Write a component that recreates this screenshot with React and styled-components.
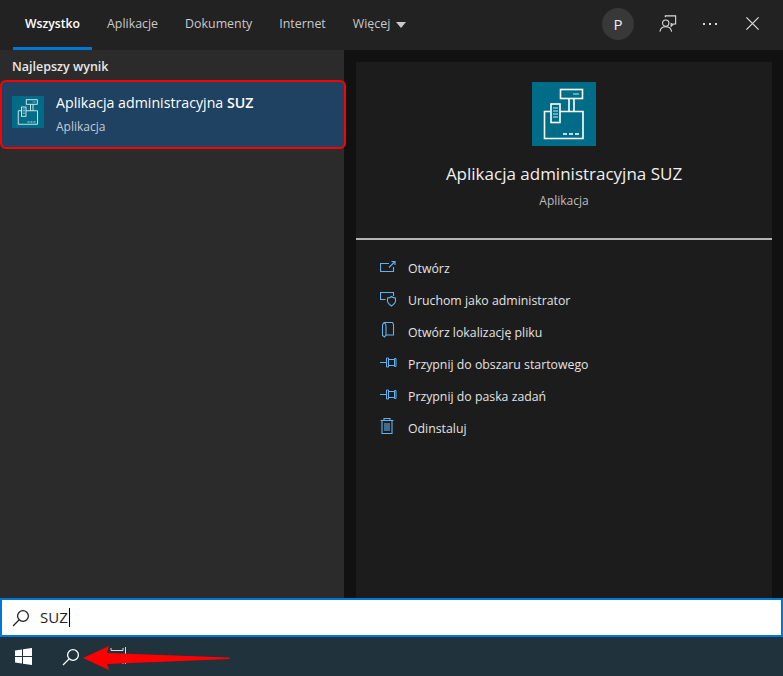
import React from "react";
import styled, { createGlobalStyle } from "styled-components";

const GlobalStyle = createGlobalStyle`
  html, body { margin: 0; padding: 0; background: #111; }
  body { font-family: "Open Sans", "Noto Sans", sans-serif; }
`;

const tabs = ["Wszystko", "Aplikacje", "Dokumenty", "Internet"];

const actions = [
  { label: "Otwórz", icon: "open" },
  { label: "Uruchom jako administrator", icon: "shield" },
  { label: "Otwórz lokalizację pliku", icon: "folder" },
  { label: "Przypnij do obszaru startowego", icon: "pin" },
  { label: "Przypnij do paska zadań", icon: "pin" },
  { label: "Odinstaluj", icon: "trash" }
];

function AppGlyph({ size }) {
  return (
    <svg width={size} height={size} viewBox="0 0 64 64" fill="none" stroke="#fff" strokeWidth="1.6">
      <rect x="28.5" y="7.5" width="22" height="9" />
      <path d="M37 17v12M42 17v12" />
      <path d="M18 29.5H12.5V56.5H51V29.5H28" />
      <rect x="19" y="22" width="9" height="18.5" />
      <path d="M41 12h6M21 26h5M21 29h5M21 32h5M21 35h5" strokeOpacity=".55" />
      <path d="M31 52h4M37 52h4M43 52h4" />
    </svg>
  );
}

function ActionIcon({ name }) {
  const common = { width: 18, height: 18, viewBox: "0 0 18 18", fill: "none", stroke: "#5fb2ee", strokeWidth: 1.1 };
  if (name === "open") {
    return (
      <svg {...common}>
        <path d="M9 6.500H.5v8h13V10" />
        <path d="M9 10.500L14.500 5M11.500 4.500h3.500V8" />
      </svg>
    );
  }
  if (name === "shield") {
    return (
      <svg {...common}>
        <path d="M5.500 10.500H.5v-7h13V7" />
        <path d="M7.500 9c2 0 3-.5 4-1.500 1 1 2 1.500 4 1.500v3c0 2-2 3.500-4 5-2-1.500-4-3-4-5z" />
      </svg>
    );
  }
  if (name === "folder") {
    return (
      <svg {...common}>
        <path d="M4 1.500h8.500l1 2v10.500H6" />
        <path d="M4 1.500c1.500 1 2 2 2 3.500v9l-1.500 2-2-1.500V4z" />
      </svg>
    );
  }
  if (name === "trash") {
    return (
      <svg {...common}>
        <path d="M.5 3.500h13M4 3.500V1.500h6v2M2 3.500v13h10v-13M5 6v8M7 6v8M9 6v8" />
      </svg>
    );
  }
  return (
    <svg {...common} strokeWidth="1">
      <path d="M0 9.500h6M6.500 5h2v9h-2zM8.500 6.500h6M8.500 12.500h6M14.500 5.500h1.500v8h-1.500z" />
    </svg>
  );
}

function Lens({ color }) {
  return (
    <svg width="18" height="18" viewBox="0 0 18 18" fill="none" stroke={color} strokeWidth="1.300">
      <circle cx="11" cy="7" r="5.400" />
      <path d="M7 11l-6 6" />
    </svg>
  );
}

export default function App() {
  return (
    <>
      <GlobalStyle />
      <Page>
        <TopBar>
          <TabList>
            {tabs.map((tab, i) => (
              <Tab key={tab} $active={i === 0}>{tab}</Tab>
            ))}
            <Tab>
              Więcej
              <Caret />
            </Tab>
          </TabList>
          <TopActions>
            <Avatar>P</Avatar>
            <TopIcon>
              <svg width="18" height="18" viewBox="0 0 20 20" fill="none" stroke="#ddd" strokeWidth="1.200">
                <circle cx="7.500" cy="9" r="3.500" />
                <path d="M1 18.500c.5-3.500 3-5.500 6.500-5.500s6 2 6.500 5.500" />
                <path d="M7 2.500V1h11.500v9H16l-2.500 2.500V9.500l2 1" />
              </svg>
            </TopIcon>
            <TopIcon>
              <Dots><i /><i /><i /></Dots>
            </TopIcon>
            <TopIcon>
              <svg width="15" height="15" viewBox="0 0 16 16" stroke="#ddd" strokeWidth="1.300">
                <path d="M1.500 1.500l13 13M14.500 1.500l-13 13" />
              </svg>
            </TopIcon>
          </TopActions>
        </TopBar>

        <Content>
          <ResultsPane>
            <SectionTitle>Najlepszy wynik</SectionTitle>
            <ResultRow>
              <ResultTile>
                <AppGlyph size={32} />
              </ResultTile>
              <ResultText>
                <ResultName>
                  Aplikacja administracyjna <b>SUZ</b>
                </ResultName>
                <ResultKind>Aplikacja</ResultKind>
              </ResultText>
            </ResultRow>
          </ResultsPane>

          <DetailPane>
            <DetailHead>
              <DetailTile>
                <AppGlyph size={64} />
              </DetailTile>
              <DetailName>Aplikacja administracyjna SUZ</DetailName>
              <DetailKind>Aplikacja</DetailKind>
            </DetailHead>
            <ActionList>
              {actions.map(action => (
                <ActionRow key={action.label}>
                  <ActionIconBox>
                    <ActionIcon name={action.icon} />
                  </ActionIconBox>
                  {action.label}
                </ActionRow>
              ))}
            </ActionList>
          </DetailPane>
        </Content>

        <SearchBox>
          <Lens color="#222" />
          <SearchValue>SUZ</SearchValue>
        </SearchBox>

        <TaskBar>
          <StartButton>
            <svg width="17" height="17" viewBox="0 0 17 17" fill="#fff">
              <path d="M0 2.400l7-1v6.700H0zM8 1.300L17 0v8.100H8zM0 9h7v6.600l-7-1zM8 9h9v8l-9-1.300z" />
            </svg>
          </StartButton>
          <TaskSearch>
            <Lens color="#fff" />
          </TaskSearch>
          <TaskView width="17" height="18" viewBox="0 0 17 18" fill="none" stroke="#ddd">
            <path d="M1 1v2.500h12V1M15.500 0v17M13 14v3" />
          </TaskView>
          <Arrow width="150" height="26" viewBox="0 0 150 26">
            <path d="M0 13L26 1 24 8 146.500 12.600V14L24 19 26 25z" fill="#f00" />
          </Arrow>
        </TaskBar>
      </Page>
    </>
  );
}

const Page = styled.div`
  width: 783px;
  height: 676px;
  display: flex;
  flex-direction: column;
  background: #111;
  overflow: hidden;
`;

const TopBar = styled.div`
  height: 50px;
  flex: none;
  display: flex;
  justify-content: space-between;
  background: #222222;
`;

const TabList = styled.div`
  display: flex;
  padding-left: 13px;
`;

const Tab = styled.div`
  height: 50px;
  box-sizing: border-box;
  padding: 0 12px;
  margin-right: 3px;
  display: flex;
  align-items: center;
  font-size: ${props => (props.$active ? "12.200px" : "12.400px")};
  color: ${props => (props.$active ? "#fff" : "#c9c9c9")};
  font-weight: ${props => (props.$active ? 600 : 400)};
  border-bottom: 3px solid ${props => (props.$active ? "#0078d7" : "transparent")};
`;

const Caret = styled.span`
  margin-left: 6px;
  margin-top: 2px;
  border-left: 5.500px solid transparent;
  border-right: 5.500px solid transparent;
  border-top: 6px solid #c9c9c9;
`;

const TopActions = styled.div`
  display: flex;
  align-items: center;
  padding: 0 10px 3px 0;
`;

const Avatar = styled.div`
  width: 32px;
  height: 32px;
  margin-right: 13px;
  border-radius: 50%;
  background: #383838;
  color: #eee;
  font-size: 15px;
  display: flex;
  align-items: center;
  justify-content: center;
`;

const TopIcon = styled.div`
  width: 42px;
  height: 32px;
  display: flex;
  align-items: center;
  justify-content: center;
`;

const Dots = styled.div`
  display: flex;
  gap: 4px;
  i {
    width: 2px;
    height: 2px;
    background: #ddd;
  }
`;

const Content = styled.div`
  flex: 1;
  min-height: 0;
  display: flex;
`;

const ResultsPane = styled.div`
  width: 344px;
  flex: none;
  background: #2b2b2b;
`;

const SectionTitle = styled.div`
  height: 30px;
  padding: 2px 0 0 12px;
  box-sizing: border-box;
  display: flex;
  align-items: center;
  font-size: 12.500px;
  font-weight: 600;
  color: #e8e8e8;
`;

const ResultRow = styled.div`
  box-sizing: border-box;
  height: 69px;
  width: 346px;
  position: relative;
  display: flex;
  align-items: center;
  padding-left: 10px;
  gap: 12px;
  background: #1f4262;
  border: 2px solid #f00;
  border-radius: 6px;
`;

const ResultTile = styled.div`
  width: 32px;
  height: 32px;
  background: #006c87;
  margin-bottom: 5px;
`;

const ResultText = styled.div`
  display: flex;
  flex-direction: column;
  gap: 6px;
  margin-top: -1px;
`;

const ResultName = styled.div`
  font-size: 14.200px;
  color: #fff;
  b {
    font-weight: 600;
  }
`;

const ResultKind = styled.div`
  font-size: 12px;
  color: #c3ccd4;
`;

const DetailPane = styled.div`
  width: 416px;
  flex: none;
  margin: 12px 11px 0 12px;
  background: #1c1c1c;
`;

const DetailHead = styled.div`
  height: 178px;
  box-sizing: border-box;
  padding-top: 20px;
  display: flex;
  flex-direction: column;
  align-items: center;
  border-bottom: 2px solid #b5b5b5;
`;

const DetailTile = styled.div`
  width: 64px;
  height: 64px;
  background: #006c87;
`;

const DetailName = styled.div`
  margin-top: 16px;
  font-size: 17px;
  color: #f0f0f0;
`;

const DetailKind = styled.div`
  margin-top: 7px;
  font-size: 12px;
  color: #bdbdbd;
`;

const ActionList = styled.div`
  padding: 12px 0 0 24px;
`;

const ActionRow = styled.div`
  height: 32px;
  display: flex;
  align-items: center;
  font-size: 12.300px;
  color: #e2e2e2;
`;

const ActionIconBox = styled.span`
  width: 28px;
  height: 18px;
  margin-top: -4px;
`;

const SearchBox = styled.div`
  height: 39px;
  flex: none;
  box-sizing: border-box;
  display: flex;
  align-items: center;
  padding-left: 10px;
  background: #fff;
  border: 2px solid #0078d7;
`;

const SearchValue = styled.div`
  margin-left: 10px;
  padding-right: 1px;
  border-right: 1px solid #000;
  font-size: 15px;
  line-height: 19px;
  color: #222;
`;

const TaskBar = styled.div`
  height: 39px;
  flex: none;
  position: relative;
  display: flex;
  align-items: center;
  background: #20323c;
`;

const StartButton = styled.div`
  width: 46px;
  padding-left: 15px;
  display: flex;
`;

const TaskSearch = styled.div`
  width: 48px;
  padding-left: 1px;
  display: flex;
`;

const TaskView = styled.svg`
  margin-bottom: 2px;
`;

const Arrow = styled.svg`
  position: absolute;
  left: 83px;
  top: 8px;
`;
